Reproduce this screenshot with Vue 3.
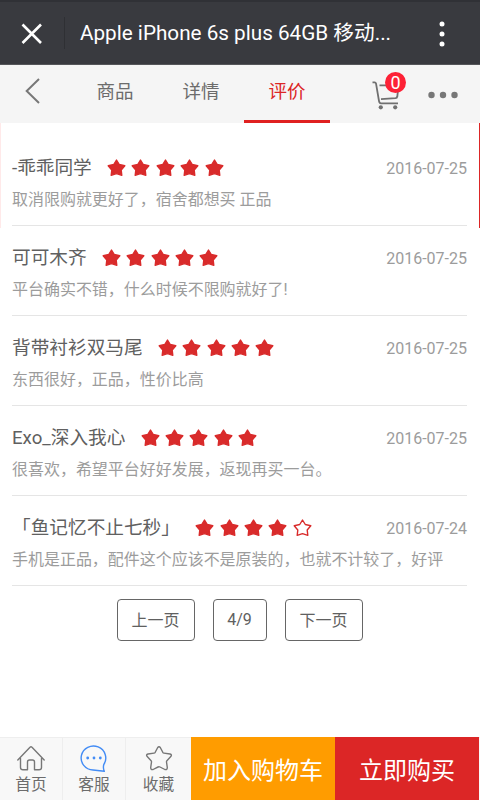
<script setup>
const tabs = ['商品', '详情', '评价']
const reviews = [
  { name: '-乖乖同学', stars: 5, date: '2016-07-25', text: '取消限购就更好了，宿舍都想买 正品' },
  { name: '可可木齐', stars: 5, date: '2016-07-25', text: '平台确实不错，什么时候不限购就好了!' },
  { name: '背带衬衫双马尾', stars: 5, date: '2016-07-25', text: '东西很好，正品，性价比高' },
  { name: 'Exo_深入我心', stars: 5, date: '2016-07-25', text: '很喜欢，希望平台好好发展，返现再买一台。' },
  { name: '「鱼记忆不止七秒」', stars: 4, date: '2016-07-24', text: '手机是正品，配件这个应该不是原装的，也就不计较了，好评' },
]
</script>

<template>
  <div class="screen">
    <header class="titlebar">
      <svg class="close" width="22" height="22" viewBox="0 0 22 22"><path d="M1.500 1.500 20 20M20 1.500 1.500 20" /></svg>
      <i class="split"></i>
      <h1>Apple iPhone 6s plus 64GB 移动...</h1>
      <svg class="more" width="6" height="26" viewBox="0 0 6 26"><circle cx="3" cy="3" r="2.5" /><circle cx="3" cy="13" r="2.5" /><circle cx="3" cy="23" r="2.5" /></svg>
    </header>

    <nav class="tabs">
      <svg class="back" width="16" height="28" viewBox="0 0 16 28"><path d="M14 2 1.700 14 14 26" /></svg>
      <a v-for="(t, i) in tabs" :key="t" :class="['tab', { active: i === 2 }]">{{ t }}</a>
      <div class="cart">
        <svg width="30" height="30" viewBox="0 0 30 30">
          <path d="M0.500 1.300H2.700Q3.700 1.300 4 2.400L7 20Q7.400 22.300 9 22.300H26M7.500 4.300H26.500L25.300 15.500Q25 17 23.500 17.200L9 18.200" />
          <circle cx="8.800" cy="26.300" r="2.100" /><circle cx="23.200" cy="26.300" r="2.100" />
        </svg>
        <span class="badge">0</span>
      </div>
      <svg class="dots" width="30" height="8" viewBox="0 0 30 8"><circle cx="3.500" cy="4" r="3.200" /><circle cx="15" cy="4" r="3.200" /><circle cx="26.500" cy="4" r="3.200" /></svg>
    </nav>

    <main class="reviews">
      <i class="edge left"></i>
      <i class="edge right"></i>
      <article v-for="r in reviews" :key="r.name" class="review">
        <div class="head">
          <span class="name">{{ r.name }}</span>
          <span class="stars">
            <svg v-for="n in 5" :key="n" :class="{ hollow: n > r.stars }" width="19" height="18" viewBox="0 0 19 18">
              <path d="M9.500 1 12.300 5.500 17.800 6.700 14.200 11 14.800 16.300 9.500 14.600 4.200 16.300 4.800 11 1.200 6.700 6.700 5.500Z" />
            </svg>
          </span>
          <time>{{ r.date }}</time>
        </div>
        <p>{{ r.text }}</p>
      </article>
      <div class="pager">
        <button>上一页</button>
        <button class="page">4/9</button>
        <button>下一页</button>
      </div>
    </main>

    <footer class="bottom">
      <a class="item">
        <svg width="30" height="28" viewBox="0 0 30 28"><path d="M1.800 15 14 2.200Q15 1.400 16 2.200L28.200 15M4.500 13.500V22.500Q4.500 24.800 7 24.800H11.500V17Q11.500 15 13.500 15H16.500Q18.500 15 18.500 17V24.800H23Q25.500 24.800 25.500 22.500V13.500" /></svg>
        <span>首页</span>
      </a>
      <a class="item service">
        <svg width="30" height="28" viewBox="0 0 30 28">
          <path d="M24.800 19.500A12.300 12 0 1 0 14 25L25.300 26.300Q23.800 23 24.800 19.500Z" />
          <circle cx="8.700" cy="13" r="1.400" /><circle cx="15" cy="13" r="1.400" /><circle cx="21.300" cy="13" r="1.400" />
        </svg>
        <span>客服</span>
      </a>
      <a class="item fav">
        <svg width="30" height="28" viewBox="0 0 30 28"><path d="M13.600 2.700Q15 0.700 16.400 2.700L18.800 7.300Q19.200 8 20 8.100L26 9Q28.300 9.700 26.800 11.600L22.900 15.700Q22.400 16.300 22.500 17L23.300 22.700Q23.200 25.200 20.900 24.500L16 22Q15 21.500 14 22L9.100 24.500Q6.800 25.200 6.700 22.700L7.500 17Q7.600 16.300 7.100 15.700L3.200 11.600Q1.700 9.700 4 9L10 8.100Q10.800 8 11.200 7.300Z" /></svg>
        <span>收藏</span>
      </a>
      <button class="add">加入购物车</button>
      <button class="buy">立即购买</button>
    </footer>
  </div>
</template>

<style>
body { margin: 0; background: #fff; }
</style>

<style scoped>
* { box-sizing: border-box; }
.screen {
  width: 480px; height: 800px; display: flex; flex-direction: column;
  background: #fff; overflow: hidden;
  font-family: Roboto, "Noto Sans CJK SC", sans-serif; color: #666;
}
svg { display: block; fill: none; flex: none; }
.titlebar {
  height: 65px; flex: none; display: flex; align-items: center;
  background: #393a3f; border-top: 2px solid #303136; border-bottom: 1px solid #55565a;
  padding: 0 36px 0 21px;
}
.close { stroke: #fff; stroke-width: 2.6; margin-top: 2px; }
.split { width: 1px; height: 32px; background: #2f3034; margin-left: 21px; }
h1 { margin: 0 0 0 15px; flex: 1; font-size: 20.700px; line-height: 30px; font-weight: 400; color: #fff; white-space: nowrap; }
.more { fill: #fff; margin: 2px -1px 0 0; }
.tabs { height: 58px; flex: none; display: flex; background: #f5f5f5; padding-left: 25px; }
.back { stroke: #777; stroke-width: 2; margin: 12px 31px 0 0; }
.tab { width: 86px; height: 58px; text-align: center; font-size: 18.500px; line-height: 54px; color: #6c6c6c; }
.active { color: #dc2626; border-bottom: 3px solid #e02020; }
.cart { position: relative; margin: 16px 0 0 42px; width: 30px; height: 30px; }
.cart svg { stroke: #707070; stroke-width: 1.8; }
.cart circle { fill: #707070; stroke: none; }
.badge {
  position: absolute; left: 13px; top: -9.500px; width: 21px; height: 21px; border-radius: 50%;
  background: #fd2136; color: #fff; font-size: 18px; line-height: 21px; text-align: center;
}
.dots { fill: #777; margin: 25.500px 0 0 26px; }
.reviews { position: relative; flex: 1; padding: 13px 13px 0 12px; }
.edge { position: absolute; top: 0; width: 1px; height: 105px; }
.left { left: 0; background: #ffe9e9; }
.right { right: 0; background: #dc2626; }
.review { height: 90px; border-bottom: 1px solid #e5e5e5; padding-top: 17px; }
.head { height: 30px; display: flex; align-items: center; }
.name { font-size: 18.670px; line-height: 30px; color: #606060; white-space: nowrap; }
.stars { display: flex; gap: 5.400px; margin-left: 15.300px; }
.stars svg { fill: #d92b2b; stroke: #d92b2b; stroke-width: 1.4; stroke-linejoin: round; }
.stars .hollow { fill: none; }
time { margin-left: auto; font-size: 16px; color: #9c9c9c; }
p { margin: 4px 0 0; font-size: 15.970px; line-height: 26px; color: #9c9c9c; white-space: nowrap; }
.pager { display: flex; justify-content: center; gap: 18px; padding: 13px 0 0; }
button { font-family: inherit; padding: 0; margin: 0; font-weight: 400; }
.pager button {
  width: 78px; height: 42px; background: #fff; border: 1.500px solid #666; border-radius: 4px;
  font-size: 16px; color: #606060; padding-bottom: 2px;
}
.pager .page { width: 54px; }
.bottom { height: 63px; flex: none; display: flex; background: #f8f8f8; border-top: 1px solid #eee; }
.item {
  width: 63px; display: flex; flex-direction: column; align-items: center; padding-top: 7px;
  border-right: 1px solid #eee; font-size: 15.700px; color: #6c6c6c;
}
.item svg { stroke: #777; stroke-width: 1.4; stroke-linejoin: round; stroke-linecap: round; }
.item span { line-height: 24px; }
.item.service svg { stroke: #438cf5; }
.item.service circle { fill: #438cf5; stroke: none; }
.fav { width: 65px; border-right: 0; }
.add, .buy { border: 0; font-size: 24px; color: #fff; width: 144px; margin-top: -1px; height: 63px; }
.add { background: #ff9c00; }
.buy { background: #dc2626; }
</style>
